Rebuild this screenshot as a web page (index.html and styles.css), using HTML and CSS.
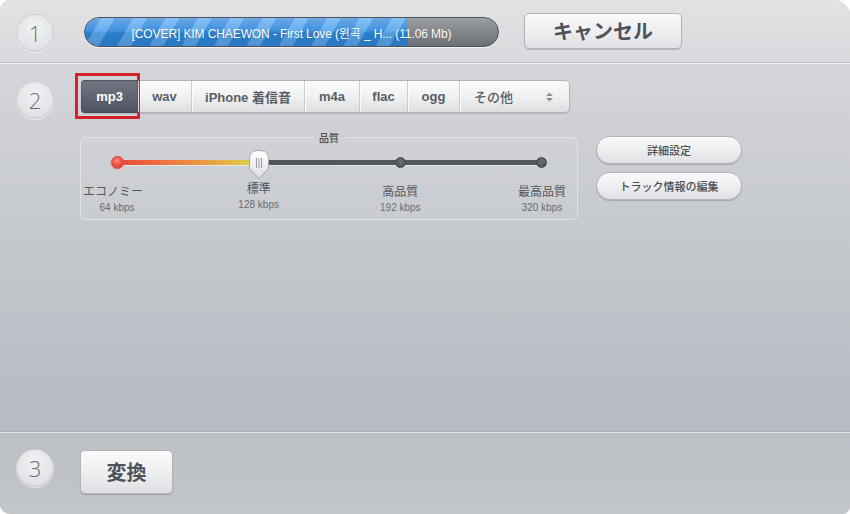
FILE: index.html
```html
<!DOCTYPE html>
<html lang="ja">
<head>
<meta charset="utf-8">
<title>Converter</title>
<link rel="stylesheet" href="styles.css">
</head>
<body>
<div class="app">
  <section class="step step-one">
    <div class="num">1</div>
    <div class="progress">
      <div class="progress-fill" style="width: 323px"></div>
      <span class="progress-label">[COVER] KIM CHAEWON - First Love (윈곡 _ H... (11.06 Mb)</span>
    </div>
    <button class="btn btn-cancel">キャンセル</button>
  </section>

  <section class="step step-two">
    <div class="num">2</div>
    <div class="settings">
      <div class="tabs">
        <div class="tab tab-mp3 active">mp3<span class="highlight"></span></div>
        <div class="tab tab-wav">wav</div>
        <div class="tab tab-iphone">iPhone 着信音</div>
        <div class="tab tab-m4a">m4a</div>
        <div class="tab tab-flac">flac</div>
        <div class="tab tab-ogg">ogg</div>
        <div class="tab tab-other">その他
          <svg class="updown" width="9" height="12" viewBox="0 0 9 12"><path d="M1 5 L4.5 1.5 L8 5 Z M1 7 L4.5 10.5 L8 7 Z" fill="#8a8e95"/></svg>
        </div>
      </div>
      <div class="quality-row">
        <fieldset class="quality">
          <legend>品質</legend>
          <div class="slider">
            <div class="track"></div>
            <div class="stop">
              <span class="dot dot-start"></span>
              <span class="stop-name">エコノミー</span>
              <span class="stop-rate">64 kbps</span>
            </div>
            <div class="stop">
              <span class="knob-slot">
                <svg class="knob" width="22" height="31" viewBox="0 0 22 31">
                  <defs>
                    <linearGradient id="kg" x1="0" y1="0" x2="0" y2="1">
                      <stop offset="0" stop-color="#ffffff"/>
                      <stop offset="1" stop-color="#dcdde0"/>
                    </linearGradient>
                  </defs>
                  <path d="M11 1.5 C17 1.5 20.5 4 20.5 9.5 L20.5 19.5 L11 29.5 L1.5 19.5 L1.5 9.5 C1.5 4 5 1.5 11 1.5 Z" fill="url(#kg)" stroke="#a4a7ad" stroke-width="1"/>
                  <path d="M8.5 9 V19 M11 9 V19 M13.5 9 V19" stroke="#9a9da3" stroke-width="1"/>
                </svg>
              </span>
              <span class="stop-name">標準</span>
              <span class="stop-rate">128 kbps</span>
            </div>
            <div class="stop">
              <span class="dot"></span>
              <span class="stop-name">高品質</span>
              <span class="stop-rate">192 kbps</span>
            </div>
            <div class="stop">
              <span class="dot"></span>
              <span class="stop-name">最高品質</span>
              <span class="stop-rate">320 kbps</span>
            </div>
          </div>
        </fieldset>
        <div class="side-buttons">
          <button class="btn btn-pill">詳細設定</button>
          <button class="btn btn-pill">トラック情報の編集</button>
        </div>
      </div>
    </div>
  </section>

  <section class="step step-three">
    <div class="num">3</div>
    <button class="btn btn-convert">変換</button>
  </section>
</div>
</body>
</html>
```

FILE: styles.css
```css
html, body {
  margin: 0;
  padding: 0;
  background: #ffffff;
}

body {
  width: 850px;
  height: 514px;
  overflow: hidden;
  font-family: "Liberation Sans", "Noto Sans CJK JP", "Noto Sans CJK KR", sans-serif;
}

.app {
  width: 850px;
  height: 514px;
  display: flex;
  flex-direction: column;
  border-radius: 10px 16px 8px 10px;
  overflow: hidden;
  background: #c4c7cc;
}

.step {
  display: flex;
  align-items: flex-start;
  box-sizing: border-box;
}

.step-one {
  height: 63px;
  background: linear-gradient(#e2e3e5, #d8d9dc);
  border-bottom: 1px solid #c3c5c9;
}

.step-two {
  height: 369px;
  background: linear-gradient(#d4d6d9 0, #c6c9ce 160px, #b6bac1 368px);
  border-top: 1px solid #eef0f2;
  border-bottom: 1px solid #a9adb4;
}

.step-three {
  flex: 1;
  background: linear-gradient(#bcbfc5, #c2c5ca);
  border-top: 1px solid #e2e4e7;
}

.num {
  width: 38px;
  height: 38px;
  margin-left: 16px;
  flex: none;
  box-sizing: border-box;
  border-radius: 50%;
  background: radial-gradient(circle at 50% 35%, #f1f2f4 0, #e4e5e8 60%, #d9dbde 100%);
  border: 1px solid #cfd1d5;
  box-shadow: 0 1px 0 rgba(255,255,255,0.6), inset 0 -1px 1px rgba(0,0,0,0.05);
  display: flex;
  align-items: center;
  justify-content: center;
  font-family: "Open Sans", "DejaVu Sans", sans-serif;
  font-weight: 300;
  font-size: 22px;
  color: #6c6f75;
}

.step-one .num { margin-top: 14px; }
.step-two .num { margin-top: 17px; }
.step-three .num { margin-top: 16px; }

/* progress */
.progress {
  position: relative;
  width: 415px;
  height: 30px;
  margin: 17px 0 0 30px;
  box-sizing: border-box;
  border-radius: 15px;
  border: 1px solid #4f545c;
  background: linear-gradient(#9b9ea3 0, #85888d 45%, #6c6f74 100%);
  overflow: hidden;
  display: flex;
  align-items: center;
  justify-content: center;
  box-shadow: 0 1px 0 rgba(255,255,255,0.7);
}

.progress-fill {
  position: absolute;
  left: 0;
  top: 0;
  bottom: 0;
  border-radius: 14px 0 0 14px;
  background:
    linear-gradient(rgba(255,255,255,0.28) 0, rgba(255,255,255,0.08) 45%, rgba(0,0,0,0.08) 55%, rgba(0,0,0,0.12) 100%),
    repeating-linear-gradient(-60deg, #2f88dc 0, #2f88dc 16px, #5aa8ee 16px, #5aa8ee 28px);
}

.progress-label {
  position: relative;
  color: #ffffff;
  font-size: 12px;
  letter-spacing: -0.1px;
  white-space: nowrap;
  text-shadow: 0 0 1px rgba(0,0,0,0.25);
}

/* buttons */
.btn {
  font-family: "Noto Sans CJK JP", "Liberation Sans", sans-serif;
  box-sizing: border-box;
  border: 1px solid #b2b5ba;
  background: linear-gradient(#fafafb 0, #eeeff1 50%, #dfe0e3 100%);
  color: #4e525a;
  padding: 0;
  cursor: pointer;
  box-shadow: 0 1px 1px rgba(0,0,0,0.18), inset 0 1px 0 #ffffff;
}

.btn-cancel {
  width: 158px;
  height: 36px;
  margin: 13px 0 0 25px;
  border-radius: 5px;
  font-size: 20px;
  font-weight: 700;
  line-height: 1;
}

.btn-convert {
  width: 93px;
  height: 44px;
  margin: 17px 0 0 26px;
  border-radius: 5px;
  font-size: 20px;
  font-weight: 700;
  line-height: 1;
}

.btn-pill {
  width: 146px;
  height: 28px;
  border-radius: 14px;
  font-size: 11px;
  font-weight: 500;
  color: #4a4e55;
}

/* settings */
.settings {
  margin: 16px 0 0 26px;
  display: flex;
  flex-direction: column;
}

.tabs {
  display: flex;
  height: 33px;
  margin-left: 1px;
  box-sizing: border-box;
  border: 1px solid #b0b3b8;
  border-radius: 5px;
  background: linear-gradient(#fbfbfc 0, #f0f1f2 50%, #dcdee1 100%);
  box-shadow: 0 1px 1px rgba(0,0,0,0.15);
  align-self: flex-start;
}

.tab {
  position: relative;
  display: flex;
  align-items: center;
  justify-content: center;
  box-sizing: border-box;
  font-family: "Liberation Sans", "Noto Sans CJK JP", sans-serif;
  font-weight: 700;
  font-size: 13px;
  color: #5a5e66;
  border-left: 1px solid #c9cbcf;
}

.tab:first-child { border-left: none; }

.tab.active {
  color: #ffffff;
  background: linear-gradient(#737a86 0, #5f6672 50%, #4c525d 100%);
  border-radius: 4px 0 0 4px;
  margin: -1px 0 -1px -1px;
  box-shadow: inset 0 1px 2px rgba(0,0,0,0.35);
}

.tab + .tab { box-shadow: inset 1px 0 0 rgba(255,255,255,0.8); }

.tab-mp3 { width: 57px; }
.tab-wav { width: 53px; border-left: none; }
.tab-iphone { width: 113px; }
.tab-m4a { width: 55px; }
.tab-flac { width: 48px; }
.tab-ogg { width: 52px; }
.tab-other {
  width: 110px;
  justify-content: space-between;
  padding: 0 15px 0 14px;
  font-family: "Noto Sans CJK JP", sans-serif;
  font-weight: 500;
}

.highlight {
  position: absolute;
  left: -6px;
  top: -7px;
  width: 65px;
  height: 46px;
  box-sizing: border-box;
  border: 3px solid #d4222b;
}

.quality-row {
  display: flex;
  align-items: flex-start;
  margin-top: 16px;
}

.quality {
  width: 498px;
  height: 91px;
  margin: 0;
  padding: 0;
  min-width: 0;
  box-sizing: border-box;
  border: 1px solid rgba(240,242,245,0.55);
  border-radius: 6px;
  background: rgba(255,255,255,0.05);
}

.quality legend {
  margin: 0 auto;
  padding: 2px 6px 0;
  font-family: "Noto Sans CJK JP", sans-serif;
  font-size: 10px;
  line-height: 14px;
  color: #4a4d53;
  font-weight: 500;
}

.slider {
  position: relative;
  display: flex;
  justify-content: space-between;
  width: 491px;
  margin: 3px 0 0 3px;
}

.track {
  position: absolute;
  left: 33px;
  right: 33px;
  top: 12px;
  height: 5px;
  border-radius: 3px;
  background: linear-gradient(to right, #e9473d 0, #ef7a3d 55px, #e6b444 110px, #d9d44c 139px, #525559 139px, #55585c 100%);
  box-shadow: 0 1px 0 rgba(255,255,255,0.5);
}

.stop {
  position: relative;
  width: 66px;
  display: flex;
  flex-direction: column;
  align-items: center;
}

.dot {
  width: 11px;
  height: 11px;
  margin-top: 9px;
  box-sizing: border-box;
  border-radius: 50%;
  background: radial-gradient(circle at 50% 40%, #6a6d72, #4c4f54);
  border: 1px solid #45484d;
}

.dot-start {
  width: 13px;
  height: 13px;
  margin-top: 8px;
  background: radial-gradient(circle at 45% 35%, #ff8a80, #ec4a42 55%, #d63a33);
  border: 1px solid #d24a44;
  box-shadow: 0 0 2px rgba(255,120,110,0.7);
}

.knob-slot {
  height: 29px;
  width: 22px;
  position: relative;
}

.knob {
  position: absolute;
  left: 0;
  top: 1px;
}

.stop-name {
  margin-top: 12px;
  font-family: "Noto Sans CJK JP", sans-serif;
  font-size: 12px;
  line-height: 16px;
  color: #54575d;
  white-space: nowrap;
}

.stop .dot + .stop-name { margin-top: 15px; }
.stop .dot-start + .stop-name { margin-top: 14px; margin-left: -8px; }
.stop .knob-slot + .stop-name { margin-top: 3px; }

.stop-rate {
  margin-top: 2px;
  font-family: "Liberation Sans", sans-serif;
  font-size: 10px;
  line-height: 13px;
  color: #696c72;
  white-space: nowrap;
}

.side-buttons {
  display: flex;
  flex-direction: column;
  gap: 8px;
  margin: 7px 0 0 18px;
}
```
